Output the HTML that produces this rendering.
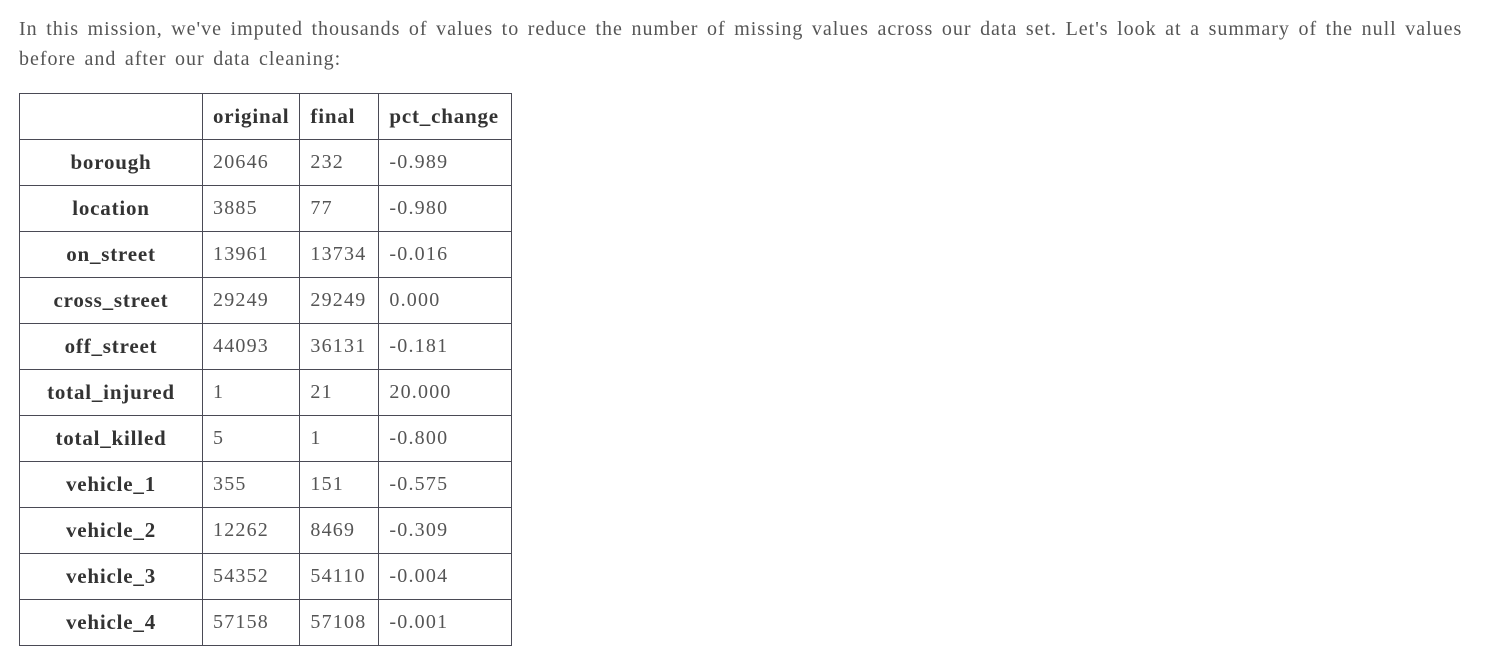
<!DOCTYPE html>
<html><head><meta charset="utf-8"><style>
body{margin:0;background:#fff;width:1500px;height:642px;overflow:hidden;font-family:"Liberation Serif",serif;}
p{position:absolute;left:19px;top:14px;margin:0;width:1475px;font-size:20px;line-height:30px;color:#555;letter-spacing:0.98px;word-spacing:2.6px;}
table{position:absolute;left:19px;top:93px;border-collapse:collapse;font-size:20px;color:#555;table-layout:fixed;}
td,th{border:1px solid #4a4a55;height:46px;padding:0 10px;box-sizing:border-box;white-space:nowrap;}
th{color:#333;font-weight:bold;font-size:21px;letter-spacing:0.8px;}
thead th{text-align:left;}
tbody th{text-align:center;}
td{text-align:left;letter-spacing:1.2px;}
</style></head><body>
<p>In this mission, we've imputed thousands of values to reduce the number of missing values across our data set. Let's look at a summary of the null values before and after our data cleaning:</p>
<table>
<colgroup><col style="width:183px"><col style="width:97px"><col style="width:79px"><col style="width:133px"></colgroup>
<thead><tr><th></th><th>original</th><th>final</th><th>pct_change</th></tr></thead>
<tbody>
<tr><th>borough</th><td>20646</td><td>232</td><td>-0.989</td></tr>
<tr><th>location</th><td>3885</td><td>77</td><td>-0.980</td></tr>
<tr><th>on_street</th><td>13961</td><td>13734</td><td>-0.016</td></tr>
<tr><th>cross_street</th><td>29249</td><td>29249</td><td>0.000</td></tr>
<tr><th>off_street</th><td>44093</td><td>36131</td><td>-0.181</td></tr>
<tr><th>total_injured</th><td>1</td><td>21</td><td>20.000</td></tr>
<tr><th>total_killed</th><td>5</td><td>1</td><td>-0.800</td></tr>
<tr><th>vehicle_1</th><td>355</td><td>151</td><td>-0.575</td></tr>
<tr><th>vehicle_2</th><td>12262</td><td>8469</td><td>-0.309</td></tr>
<tr><th>vehicle_3</th><td>54352</td><td>54110</td><td>-0.004</td></tr>
<tr><th>vehicle_4</th><td>57158</td><td>57108</td><td>-0.001</td></tr>
</tbody></table>
</body></html>
